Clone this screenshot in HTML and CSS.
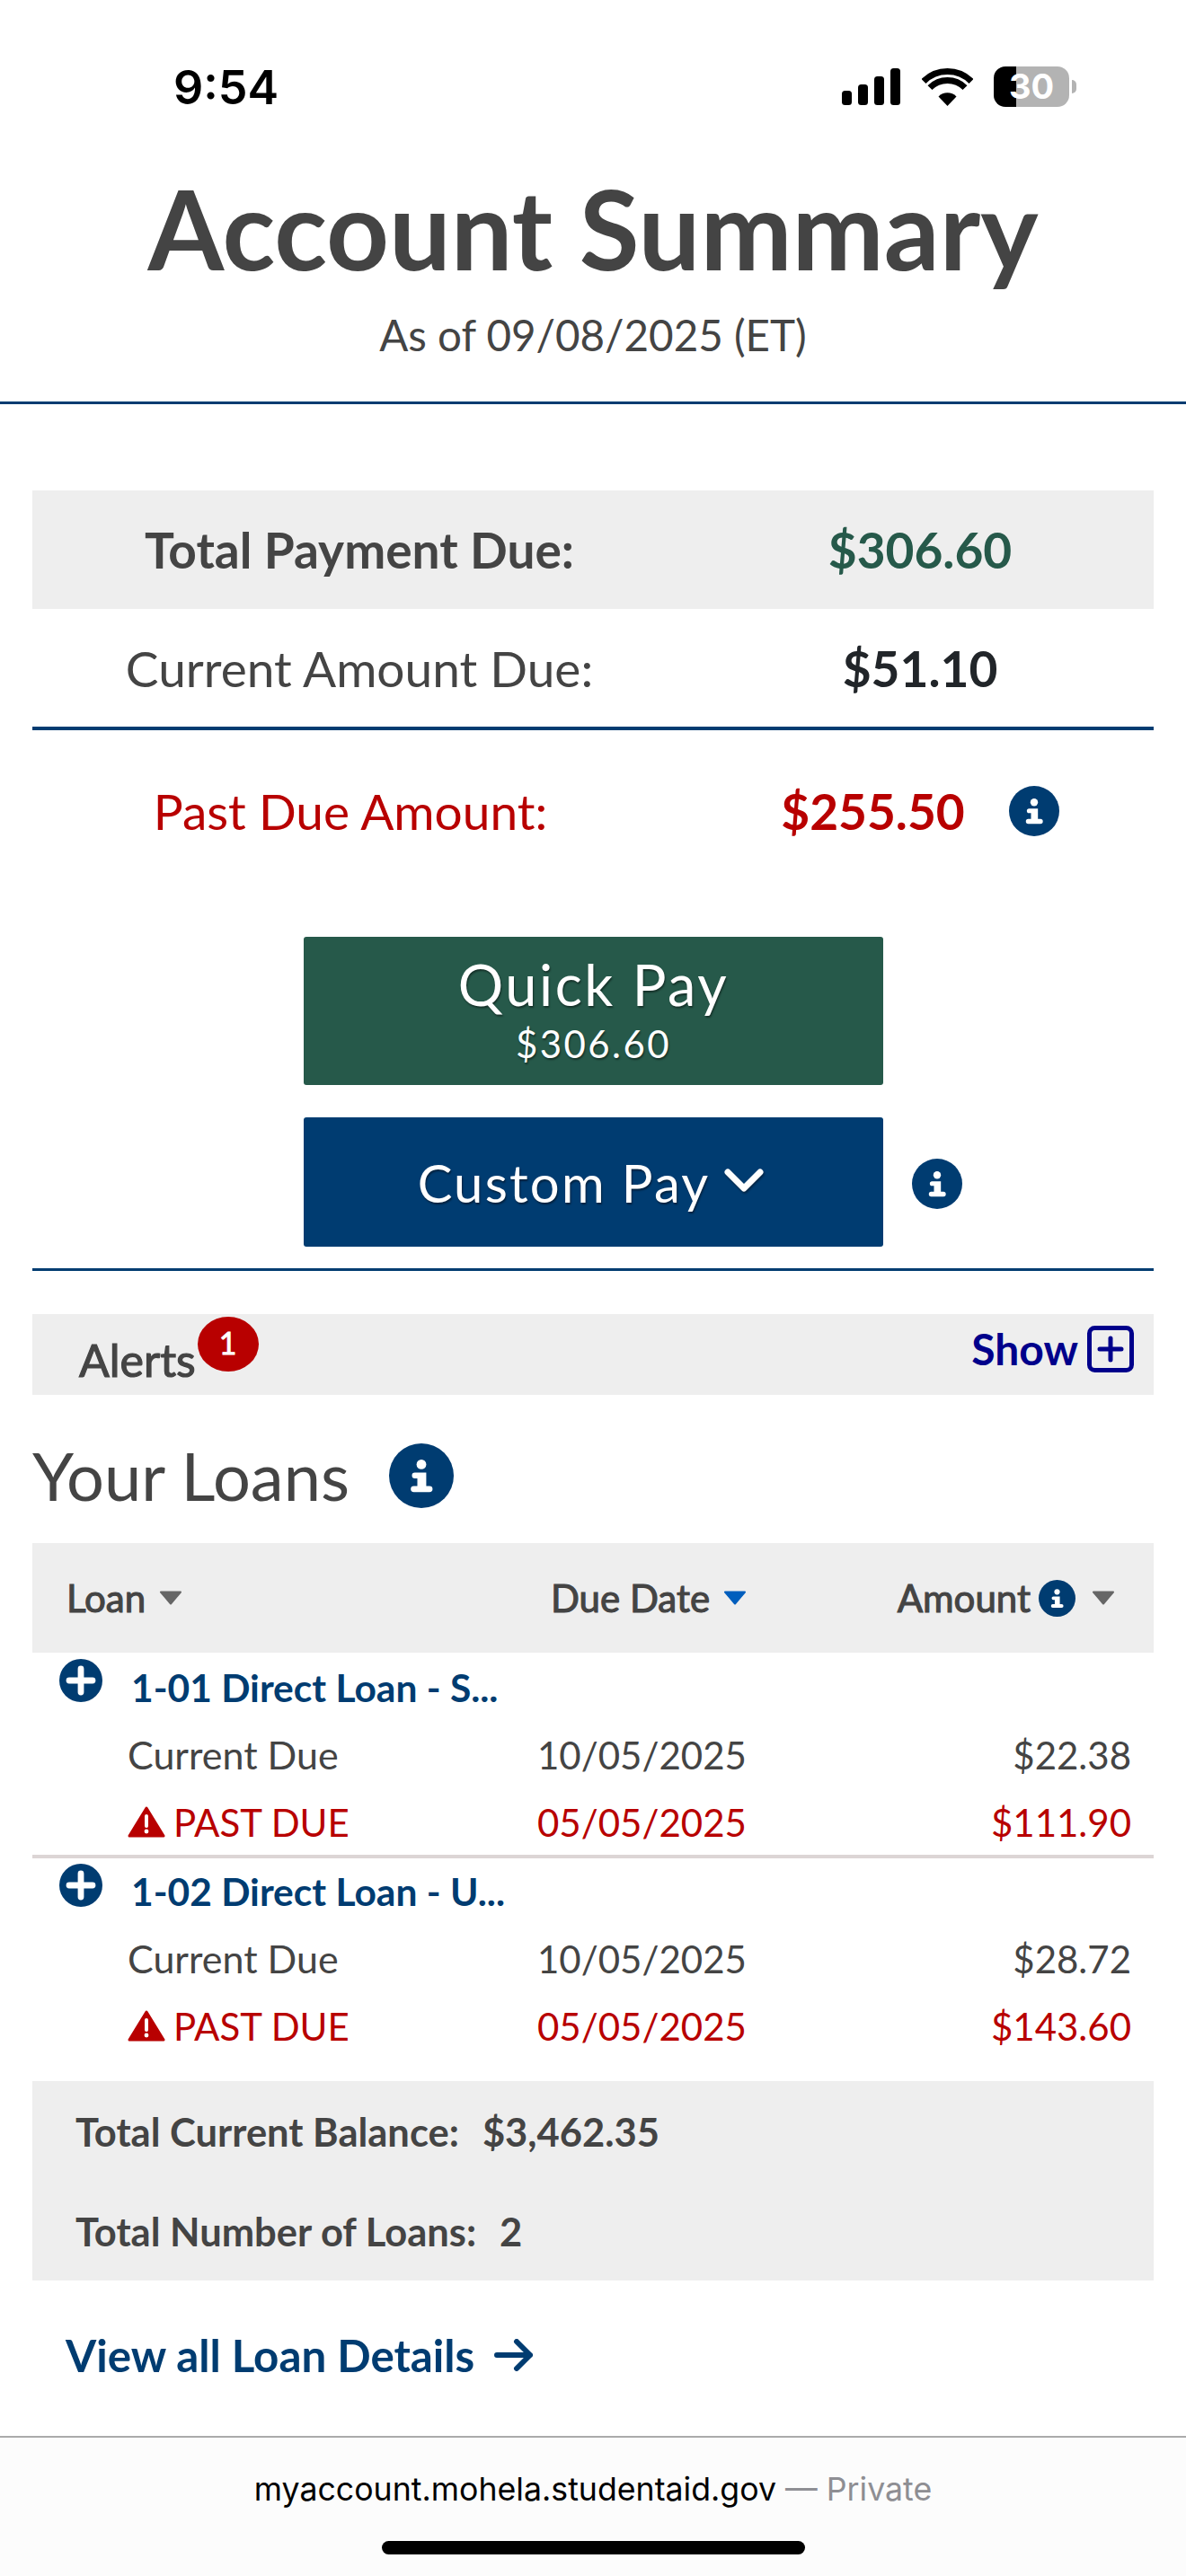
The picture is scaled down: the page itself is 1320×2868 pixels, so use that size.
FILE: index.html
```html
<!DOCTYPE html>
<html lang="en">
<head>
    <meta charset="UTF-8">
    <meta name="viewport" content="width=device-width, initial-scale=1.0">
    <title>Account Summary</title>
    <link rel="stylesheet" href="styles.css">
</head>
<body>
    <svg class="icon-defs" width="0" height="0">
        <symbol id="icon-info" viewBox="0 0 24 24">
            <circle cx="12" cy="12" r="12" fill="#003c71"/>
            <circle cx="12" cy="7.8" r="1.8" fill="#fff"/>
            <path d="M9.6 10.8h4.2v5h1.2a1.1 1.1 0 0 1 0 2.3H9.2a1.1 1.1 0 0 1 0-2.3h1.3v-2.8H9.6a1.1 1.1 0 0 1 0-2.2z" fill="#fff"/>
        </symbol>
        <symbol id="icon-plus" viewBox="0 0 24 24">
            <circle cx="12" cy="12" r="12" fill="#003c71"/>
            <path d="M12 5.5v13M5.5 12h13" stroke="#fff" stroke-width="3.4" stroke-linecap="round"/>
        </symbol>
        <symbol id="icon-warning" viewBox="0 0 42 36">
            <path d="M21 2L40 33H2z" fill="#b80000" stroke="#b80000" stroke-width="3" stroke-linejoin="round"/>
            <path d="M21 11v11" stroke="#fff" stroke-width="4" stroke-linecap="round"/>
            <circle cx="21" cy="28" r="2.4" fill="#fff"/>
        </symbol>
        <symbol id="icon-caret" viewBox="0 0 26 16">
            <path d="M2 1.5h22L13 14.5z" fill="currentColor" stroke="currentColor" stroke-width="2" stroke-linejoin="round"/>
        </symbol>
    </svg>

    <div class="status-bar">
        <span class="status-time">9:54</span>
        <div class="status-icons">
            <svg class="signal" width="65" height="41" viewBox="0 0 65 41">
                <rect x="0" y="25" width="11" height="16" rx="3.5"/>
                <rect x="18" y="18" width="11" height="23" rx="3.5"/>
                <rect x="36" y="9" width="11" height="32" rx="3.5"/>
                <rect x="54" y="0" width="11" height="41" rx="3.5"/>
            </svg>
            <svg class="wifi" width="57" height="42" viewBox="0 0 57 42">
                <path d="M2 14.5A37.5 37.5 0 0 1 55 14.5" fill="none" stroke="#000" stroke-width="7"/>
                <path d="M9 21.6A27.5 27.5 0 0 1 48 21.6" fill="none" stroke="#000" stroke-width="7"/>
                <path d="M28.5 42L18.5 31.5A14 14 0 0 1 38.5 31.5z"/>
            </svg>
            <div class="battery"><span>30</span></div>
            <div class="battery-cap"></div>
        </div>
    </div>

    <header class="page-head">
        <h1>Account Summary</h1>
        <p>As of 09/08/2025 (ET)</p>
    </header>

    <main class="content">
        <section class="amounts">
            <div class="amount-row total">
                <span>Total Payment Due:</span>
                <span class="amount-value">$306.60</span>
            </div>
            <div class="amount-row current">
                <span>Current Amount Due:</span>
                <span class="amount-value">$51.10</span>
            </div>
            <div class="amount-row past">
                <span>Past Due Amount:</span>
                <span class="amount-value">$255.50 <svg class="info-small"><use href="#icon-info"/></svg></span>
            </div>
        </section>

        <section class="pay-actions">
            <a class="btn btn-quick">
                <span class="btn-title">Quick Pay</span>
                <span class="btn-sub">$306.60</span>
            </a>
            <div class="custom-line">
                <a class="btn btn-custom">
                    <span class="btn-title">Custom Pay</span>
                    <svg class="chevron" width="44" height="26" viewBox="0 0 44 26">
                        <path d="M4 4l18 18L40 4" fill="none" stroke="#fff" stroke-width="7" stroke-linecap="round" stroke-linejoin="round"/>
                    </svg>
                </a>
                <svg class="info-small info-custom"><use href="#icon-info"/></svg>
            </div>
        </section>

        <section class="alerts">
            <div class="alerts-label">
                <span>Alerts</span>
                <span class="alerts-badge">1</span>
            </div>
            <a class="alerts-show">
                <span>Show</span>
                <svg width="52" height="52" viewBox="0 0 52 52">
                    <rect x="2.5" y="2.5" width="47" height="47" rx="6" fill="none" stroke="#00008b" stroke-width="5"/>
                    <path d="M26 14v24M14 26h24" stroke="#00008b" stroke-width="5" stroke-linecap="round"/>
                </svg>
            </a>
        </section>

        <div class="loans-title">
            <h2>Your Loans</h2>
            <svg class="info-large"><use href="#icon-info"/></svg>
        </div>

        <div class="loans-head">
            <div class="head-cell">Loan <svg class="caret"><use href="#icon-caret"/></svg></div>
            <div class="head-cell">Due Date <svg class="caret caret-active"><use href="#icon-caret"/></svg></div>
            <div class="head-cell head-amount">Amount <svg class="info-tiny"><use href="#icon-info"/></svg> <svg class="caret"><use href="#icon-caret"/></svg></div>
        </div>

        <div class="loan">
            <div class="loan-name">
                <svg class="plus"><use href="#icon-plus"/></svg>
                <a>1-01 Direct Loan - S...</a>
            </div>
            <div class="loan-line">
                <span class="due-label">Current Due</span><span>10/05/2025</span><span class="loan-amount">$22.38</span>
            </div>
            <div class="loan-line past-due">
                <span class="past-label"><svg class="warning"><use href="#icon-warning"/></svg>PAST DUE</span><span>05/05/2025</span><span class="loan-amount">$111.90</span>
            </div>
        </div>

        <div class="loan loan-last">
            <div class="loan-name">
                <svg class="plus"><use href="#icon-plus"/></svg>
                <a>1-02 Direct Loan - U...</a>
            </div>
            <div class="loan-line">
                <span class="due-label">Current Due</span><span>10/05/2025</span><span class="loan-amount">$28.72</span>
            </div>
            <div class="loan-line past-due">
                <span class="past-label"><svg class="warning"><use href="#icon-warning"/></svg>PAST DUE</span><span>05/05/2025</span><span class="loan-amount">$143.60</span>
            </div>
        </div>

        <section class="totals">
            <div class="totals-row"><span>Total Current Balance:</span><span>$3,462.35</span></div>
            <div class="totals-row"><span>Total Number of Loans:</span><span>2</span></div>
        </section>

        <a class="view-all">View all Loan Details
            <svg width="44" height="36" viewBox="0 0 44 36">
                <path d="M3 18h37M25 3l15 15-15 15" fill="none" stroke="#003c71" stroke-width="6" stroke-linecap="round" stroke-linejoin="round"/>
            </svg>
        </a>
    </main>

    <footer class="browser-bar">
        <div class="browser-url">myaccount.mohela.studentaid.gov <span>— Private</span></div>
        <div class="home-bar"></div>
    </footer>
</body>
</html>
```

FILE: styles.css
```css
* {
    box-sizing: border-box;
}
html, body {
    height: 100%;
}
body {
    margin: 0;
    background-color: #fff;
    color: #444;
    font-family: Lato, "Open Sans", sans-serif;
    overflow: hidden;
}
a {
    text-decoration: none;
}
h1, h2, p {
    margin: 0;
}
svg {
    display: block;
}
.icon-defs {
    position: absolute;
}

/* status bar */
.status-bar {
    height: 178px;
    padding: 74px 122px 0 193px;
    display: flex;
    justify-content: space-between;
    align-items: flex-start;
}
.status-time {
    font-family: Inter, "Liberation Sans", sans-serif;
    font-size: 52px;
    font-weight: 600;
    line-height: 48px;
    color: #000;
}
.status-icons {
    display: flex;
    align-items: center;
    height: 45px;
}
.wifi {
    margin-left: 24px;
}
.battery {
    margin-left: 23px;
    width: 84px;
    height: 45px;
    border-radius: 13px;
    background: linear-gradient(90deg, #000 30%, #b3b3b3 30%);
    color: #fff;
    font-family: Inter, "Liberation Sans", sans-serif;
    font-size: 38px;
    font-weight: 700;
    line-height: 45px;
    text-align: center;
}
.battery-cap {
    margin-left: 3px;
    width: 5px;
    height: 15px;
    border-radius: 0 5px 5px 0;
    background-color: #b3b3b3;
}

/* title */
.page-head {
    height: 272px;
    text-align: center;
    border-bottom: 3px solid #003c71;
}
.page-head h1 {
    font-size: 122px;
    font-weight: 700;
    line-height: 122px;
    height: 166px;
    padding-top: 15px;
}
.page-head p {
    font-size: 47.5px;
    line-height: 58px;
}

/* amounts */
.content {
    padding: 96px 36px 0;
}
.amount-row {
    display: grid;
    grid-template-columns: 728px 1fr;
    align-items: center;
    text-align: center;
    font-size: 55px;
}
.amount-row.total {
    height: 132px;
    background-color: #eee;
    font-weight: 700;
}
.amount-row.total .amount-value {
    color: #26594a;
}
.amount-row.current {
    height: 135px;
    border-bottom: 4px solid #003c71;
}
.amount-row.current .amount-value {
    font-weight: 700;
    color: #212529;
}
.amount-row.past {
    height: 180px;
    color: #b80000;
}
.amount-row.past > span:first-child {
    padding-right: 20px;
}
.amount-row.past .amount-value {
    display: flex;
    justify-content: center;
    align-items: center;
    gap: 49px;
    font-weight: 700;
}
.info-small {
    width: 56px;
    height: 56px;
}
.info-custom {
    margin-top: 4px;
}

/* pay buttons */
.pay-actions {
    margin-top: 50px;
    padding: 0 0 24px 302px;
    border-bottom: 3px solid #003c71;
}
.btn {
    display: flex;
    width: 645px;
    align-items: center;
    justify-content: center;
    border-radius: 3px;
    color: #fff;
    text-shadow: 1px 2px 2px rgba(0, 0, 0, 0.45);
}
.btn-quick {
    height: 165px;
    flex-direction: column;
    background-color: #26594a;
}
.btn-quick .btn-title {
    margin-top: -6px;
    font-size: 63px;
    line-height: 76px;
    letter-spacing: 2.6px;
}
.btn-sub {
    margin-top: 3px;
    font-size: 42px;
    line-height: 50px;
    letter-spacing: 2.4px;
}
.custom-line {
    margin-top: 36px;
    display: flex;
    align-items: center;
    gap: 32px;
}
.btn-custom {
    height: 144px;
    gap: 16px;
    padding-right: 6px;
    background-color: #003c71;
}
.btn-custom .btn-title {
    font-size: 58px;
    letter-spacing: 2.2px;
}
.chevron {
    margin-top: -4px;
    filter: drop-shadow(1px 2px 1px rgba(0, 0, 0, 0.4));
}

/* alerts */
.alerts {
    margin-top: 48px;
    height: 90px;
    background-color: #eee;
    display: flex;
    justify-content: space-between;
    padding: 0 22px 0 52px;
}
.alerts-label {
    display: flex;
    align-items: flex-start;
    gap: 2px;
    font-size: 50px;
    -webkit-text-stroke: 1.2px #444;
}
.alerts-label > span:first-child {
    margin-top: 22px;
    line-height: 58px;
}
.alerts-badge {
    margin-top: 3px;
    width: 68px;
    height: 61px;
    border-radius: 50%;
    background-color: #b80000;
    color: #fff;
    font-size: 34px;
    line-height: 58px;
    text-align: center;
    -webkit-text-stroke: 0.8px #fff;
}
.alerts-show {
    display: flex;
    align-items: flex-start;
    gap: 10px;
    padding-top: 13px;
    color: #00008b;
    font-size: 48px;
    font-weight: 700;
    line-height: 52px;
}

/* loans */
.loans-title {
    height: 165px;
    padding-top: 14px;
    display: flex;
    align-items: center;
    gap: 44px;
}
.loans-title h2 {
    font-size: 74px;
    font-weight: 400;
}
.info-large {
    width: 72px;
    height: 72px;
}
.loans-head {
    height: 122px;
    display: grid;
    grid-template-columns: 539px 1fr auto;
    align-items: center;
    padding: 0 43px 0 38px;
    background-color: #eee;
    font-size: 42px;
    -webkit-text-stroke: 1.1px #444;
}
.head-cell {
    display: flex;
    align-items: center;
    gap: 15px;
}
.caret {
    width: 26px;
    height: 16px;
    color: #666;
}
.caret-active {
    color: #005ebd;
}
.info-tiny {
    width: 41px;
    height: 41px;
    margin-left: -6px;
    margin-right: 3px;
}
.loan {
    height: 229px;
    border-bottom: 4px solid #dcd5d5;
    font-size: 42px;
}
.loan-last {
    height: 248px;
    border-bottom: 0;
}
.loan-name {
    display: flex;
    align-items: flex-start;
    padding-left: 30px;
    gap: 32px;
    height: 76px;
}
.loan-name a {
    margin-top: 14px;
    line-height: 50px;
    color: #003c71;
    font-weight: 700;
    font-size: 42.5px;
}
.loan-last .loan-name {
    height: 74px;
}
.loan-last .loan-name a {
    margin-top: 12px;
}
.loan-last .plus {
    margin-top: 6px;
}
.plus {
    margin-top: 7px;
    width: 48px;
    height: 48px;
}
.loan-line {
    height: 75px;
    display: grid;
    grid-template-columns: 456px 1fr auto;
    align-items: center;
    padding: 0 25px 0 106px;
}
.due-label {
    font-size: 43px;
}
.past-due {
    color: #b80000;
}
.past-label {
    display: flex;
    align-items: center;
    gap: 9px;
}
.warning {
    width: 42px;
    height: 36px;
}
.totals {
    height: 222px;
    background-color: #eee;
    padding: 0 48px;
    display: flex;
    flex-direction: column;
    justify-content: space-around;
    font-size: 43.5px;
    font-weight: 700;
}
.totals-row {
    display: flex;
    gap: 26px;
}

/* link */
.view-all {
    display: flex;
    align-items: center;
    gap: 22px;
    height: 172px;
    padding: 0 0 6px 37px;
    color: #003c71;
    font-size: 49.3px;
    font-weight: 700;
}

/* browser chrome */
.browser-bar {
    height: 156px;
    margin-top: 1px;
    border-top: 2px solid #aaa;
    background-color: #fcfcfc;
    text-align: center;
}
.browser-url {
    padding-top: 35px;
    font-family: Inter, "Liberation Sans", sans-serif;
    font-size: 35.7px;
    line-height: 44px;
    color: #000;
}
.browser-url span {
    color: #8e8e93;
}
.home-bar {
    margin: 36px auto 0;
    width: 471px;
    height: 15px;
    border-radius: 8px;
    background-color: #000;
}
```
